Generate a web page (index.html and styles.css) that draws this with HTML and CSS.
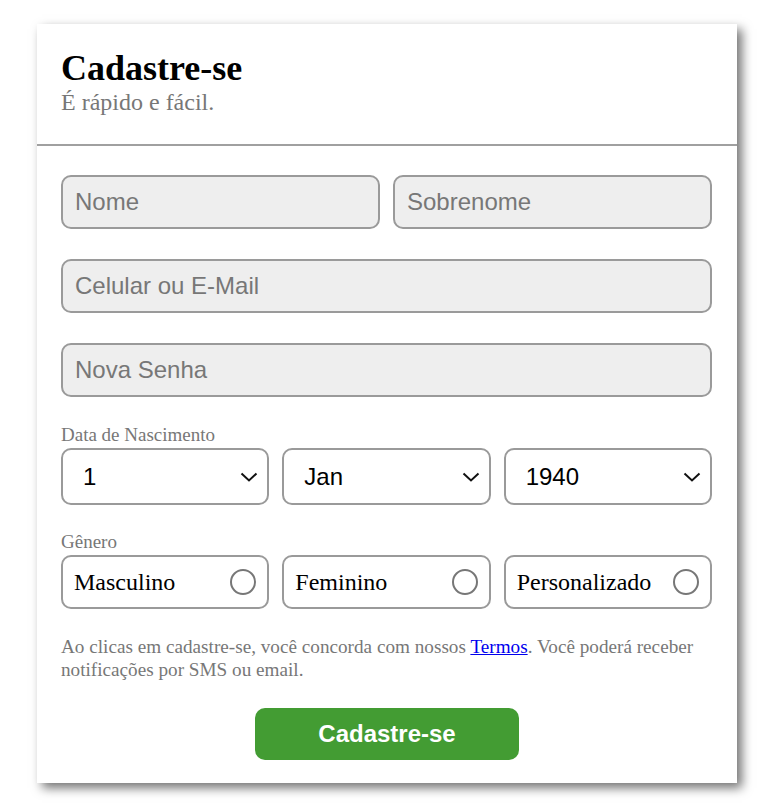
FILE: index.html
```html
<!DOCTYPE html>
<html lang="pt-BR">
<head>
<meta charset="utf-8">
<title>Cadastre-se</title>
<link rel="stylesheet" href="styles.css">
</head>
<body>
<div class="card">
  <header class="card-header">
    <h1 class="title">Cadastre-se</h1>
    <p class="subtitle">É rápido e fácil.</p>
  </header>
  <form class="card-body">
    <div class="row two">
      <input class="text-input" type="text" placeholder="Nome">
      <input class="text-input" type="text" placeholder="Sobrenome">
    </div>
    <div class="row">
      <input class="text-input" type="text" placeholder="Celular ou E-Mail">
    </div>
    <div class="row">
      <input class="text-input" type="password" placeholder="Nova Senha">
    </div>

    <div class="group">
      <div class="group-label">Data de Nascimento</div>
      <div class="three">
        <div class="select-box">
          <select class="select"><option>1</option></select>
          <svg class="chevron" width="18" height="10" viewBox="0 0 18 10"><path d="M1.5 1.5 L9 8.5 L16.5 1.5" fill="none" stroke="#111" stroke-width="2"/></svg>
        </div>
        <div class="select-box">
          <select class="select"><option>Jan</option></select>
          <svg class="chevron" width="18" height="10" viewBox="0 0 18 10"><path d="M1.5 1.5 L9 8.5 L16.5 1.5" fill="none" stroke="#111" stroke-width="2"/></svg>
        </div>
        <div class="select-box">
          <select class="select"><option>1940</option></select>
          <svg class="chevron" width="18" height="10" viewBox="0 0 18 10"><path d="M1.5 1.5 L9 8.5 L16.5 1.5" fill="none" stroke="#111" stroke-width="2"/></svg>
        </div>
      </div>
    </div>

    <div class="group gender">
      <div class="group-label">Gênero</div>
      <div class="three">
        <label class="radio-box"><span>Masculino</span><input class="radio" type="radio" name="g"></label>
        <label class="radio-box"><span>Feminino</span><input class="radio" type="radio" name="g"></label>
        <label class="radio-box"><span>Personalizado</span><input class="radio" type="radio" name="g"></label>
      </div>
    </div>

    <p class="terms">Ao clicas em cadastre-se, você concorda com nossos <a href="#">Termos</a>. Você poderá receber notificações por SMS ou email.</p>

    <div class="actions">
      <button class="submit" type="button">Cadastre-se</button>
    </div>
  </form>
</div>
</body>
</html>
```

FILE: styles.css
```css
html, body {
  margin: 0;
  padding: 0;
  background: #ffffff;
}

body {
  font-family: "Liberation Serif", "Times New Roman", serif;
  padding: 24px 0 28px;
}

.card {
  width: 700px;
  margin-left: 37px;
  background: #ffffff;
  box-shadow: 5px 5px 10px rgba(0, 0, 0, 0.55);
}

.card-header {
  padding: 24px 24px 28px;
  border-bottom: 2px solid #a0a0a0;
}

.title {
  margin: 0;
  font-size: 36px;
  line-height: 40px;
  font-weight: bold;
  color: #000;
}

.subtitle {
  margin: 1px 0 0;
  font-size: 24px;
  line-height: 27px;
  color: #777777;
}

.card-body {
  padding: 29px 25px 23px 24px;
  display: flex;
  flex-direction: column;
}

.row {
  display: flex;
  margin-bottom: 29px;
}

.row + .row {
  margin-top: 1px;
}

.row.two {
  display: grid;
  grid-template-columns: 1fr 1fr;
  column-gap: 13px;
}

.text-input {
  box-sizing: border-box;
  width: 100%;
  height: 54px;
  margin: 0;
  padding: 0 12px;
  border: 2px solid #9a9a9a;
  border-radius: 10px;
  background: #eeeeee;
  font-family: "Liberation Sans", Arial, sans-serif;
  font-size: 24px;
  color: #333;
  outline: none;
}

.text-input::placeholder {
  color: #777777;
  opacity: 1;
}

.group {
  margin-top: -2px;
}

.group-label {
  font-size: 19px;
  line-height: 21px;
  color: #777777;
  margin-bottom: 3px;
}

.three {
  display: grid;
  grid-template-columns: repeat(3, 1fr);
  column-gap: 13px;
}

.select-box {
  box-sizing: border-box;
  height: 57px;
  border: 2px solid #9a9a9a;
  border-radius: 10px;
  background: #fff;
  display: flex;
  align-items: center;
  padding: 0 9px 0 20px;
}

.select {
  flex: 1;
  min-width: 0;
  -webkit-appearance: none;
  appearance: none;
  border: none;
  background: transparent;
  outline: none;
  padding: 0;
  margin: 0;
  font-family: "Liberation Sans", Arial, sans-serif;
  font-size: 24px;
  color: #000;
}

.chevron {
  flex: none;
}

.gender {
  margin-top: 26px;
}

.radio-box {
  box-sizing: border-box;
  height: 54px;
  border: 2px solid #9a9a9a;
  border-radius: 10px;
  display: flex;
  align-items: center;
  justify-content: space-between;
  padding: 0 11px 0 11px;
  font-size: 24px;
  color: #000;
}

.radio {
  -webkit-appearance: none;
  appearance: none;
  box-sizing: border-box;
  width: 26px;
  height: 26px;
  margin: 0;
  border: 2px solid #777777;
  border-radius: 50%;
  background: #fff;
}

.terms {
  margin: 26px 0 0;
  font-size: 19.2px;
  line-height: 23px;
  color: #777777;
}

.terms a {
  color: #0000ee;
  text-decoration: underline;
}

.actions {
  display: flex;
  justify-content: center;
  margin-top: 27px;
  padding-left: 1px;
}

.submit {
  width: 264px;
  height: 52px;
  border: none;
  border-radius: 10px;
  background: #439c33;
  color: #ffffff;
  font-family: "Liberation Sans", Arial, sans-serif;
  font-weight: bold;
  font-size: 24px;
  cursor: pointer;
}
```
